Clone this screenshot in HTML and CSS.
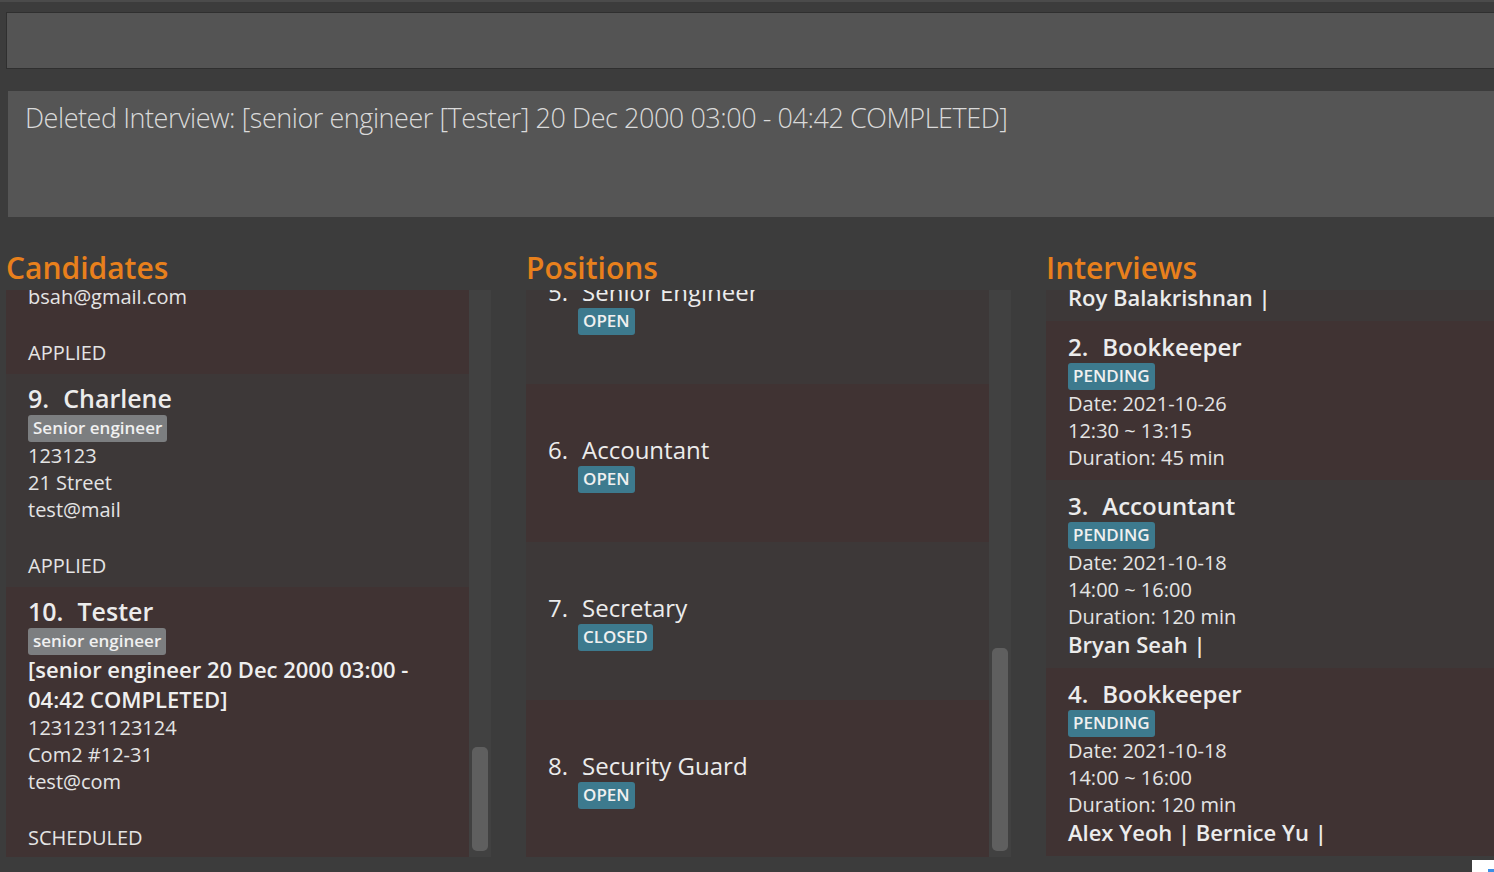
FILE: index.html
```html
<!DOCTYPE html>
<html>
<head>
<meta charset="utf-8">
<title>Recruitment</title>
<link rel="stylesheet" href="styles.css">
</head>
<body>
<div class="menubar"></div>
<div class="command"></div>
<div class="result">Deleted Interview: [senior engineer [Tester] 20 Dec 2000 03:00 - 04:42 COMPLETED]</div>
<div class="panels">
  <section class="panel">
    <h2 class="panel-title">Candidates</h2>
    <div class="list">
      <div class="viewport">
        <div class="cards cands-scroll">
          <div class="card brown cand">
            <div class="line">bsah@gmail.com</div>
            <div class="status">APPLIED</div>
          </div>
          <div class="card gray cand">
            <div class="name"><span class="idx">9.</span><span>Charlene</span></div>
            <div class="tags"><span class="tag tag-gray">Senior engineer</span></div>
            <div class="line">123123</div>
            <div class="line">21 Street</div>
            <div class="line">test@mail</div>
            <div class="status">APPLIED</div>
          </div>
          <div class="card brown cand">
            <div class="name"><span class="idx">10.</span><span>Tester</span></div>
            <div class="tags"><span class="tag tag-gray">senior engineer</span></div>
            <div class="iv">[senior engineer 20 Dec 2000 03:00 - 04:42 COMPLETED]</div>
            <div class="line">1231231123124</div>
            <div class="line">Com2 #12-31</div>
            <div class="line">test@com</div>
            <div class="status">SCHEDULED</div>
          </div>
        </div>
      </div>
      <div class="scrollbar"><div class="thumb" style="height:104px"></div></div>
    </div>
  </section>

  <section class="panel">
    <h2 class="panel-title">Positions</h2>
    <div class="list">
      <div class="viewport">
        <div class="cards pos-scroll">
          <div class="card gray pos">
            <div class="pos-title"><span class="idx">5.</span><span>Senior Engineer</span></div>
            <div class="tags pos-tags"><span class="tag tag-blue">OPEN</span></div>
          </div>
          <div class="card brown pos">
            <div class="pos-title"><span class="idx">6.</span><span>Accountant</span></div>
            <div class="tags pos-tags"><span class="tag tag-blue">OPEN</span></div>
          </div>
          <div class="card gray pos">
            <div class="pos-title"><span class="idx">7.</span><span>Secretary</span></div>
            <div class="tags pos-tags"><span class="tag tag-blue">CLOSED</span></div>
          </div>
          <div class="card brown pos">
            <div class="pos-title"><span class="idx">8.</span><span>Security Guard</span></div>
            <div class="tags pos-tags"><span class="tag tag-blue">OPEN</span></div>
          </div>
        </div>
      </div>
      <div class="scrollbar"><div class="thumb" style="height:203px"></div></div>
    </div>
  </section>

  <section class="panel">
    <h2 class="panel-title">Interviews</h2>
    <div class="list">
      <div class="viewport">
        <div class="cards iv-scroll">
          <div class="card gray ivcard">
            <div class="names">Roy Balakrishnan |</div>
          </div>
          <div class="card brown ivcard">
            <div class="iv-title"><span class="idx">2.</span><span>Bookkeeper</span></div>
            <div class="tags"><span class="tag tag-blue">PENDING</span></div>
            <div class="line">Date: 2021-10-26</div>
            <div class="line">12:30 ~ 13:15</div>
            <div class="line">Duration: 45 min</div>
          </div>
          <div class="card gray ivcard">
            <div class="iv-title"><span class="idx">3.</span><span>Accountant</span></div>
            <div class="tags"><span class="tag tag-blue">PENDING</span></div>
            <div class="line">Date: 2021-10-18</div>
            <div class="line">14:00 ~ 16:00</div>
            <div class="line">Duration: 120 min</div>
            <div class="names">Bryan Seah |</div>
          </div>
          <div class="card brown ivcard">
            <div class="iv-title"><span class="idx">4.</span><span>Bookkeeper</span></div>
            <div class="tags"><span class="tag tag-blue">PENDING</span></div>
            <div class="line">Date: 2021-10-18</div>
            <div class="line">14:00 ~ 16:00</div>
            <div class="line">Duration: 120 min</div>
            <div class="names">Alex Yeoh | Bernice Yu |</div>
          </div>
        </div>
      </div>
    </div>
  </section>
</div>
<div class="corner"><span class="corner-mark"></span></div>
</body>
</html>
```

FILE: styles.css
```css
* { box-sizing: border-box; }
html, body { margin: 0; padding: 0; }
body {
  width: 1494px;
  height: 872px;
  overflow: hidden;
  position: relative;
  background: #3c3c3c;
  font-family: "Open Sans", "Noto Sans", sans-serif;
  color: #e4e4e4;
}
.menubar { height: 2px; background: #4b4b4b; }
.command {
  margin: 10px 0 0 6px;
  height: 57px;
  background: #545454;
  border: 1px solid #2f2f2f;
  border-right: none;
}
.result {
  margin: 22px 0 0 8px;
  height: 126px;
  background: #555555;
  padding: 8px 17px;
  font-size: 27px;
  font-weight: 300;
  letter-spacing: -0.45px;
  color: #dadada;
  white-space: nowrap;
}
.panels {
  display: flex;
  gap: 35px;
  padding-left: 6px;
  margin-top: 29px;
}
.panel { flex: 0 0 485px; display: flex; flex-direction: column; }
.panel-title {
  margin: 0;
  font-size: 30px;
  font-weight: 600;
  line-height: 44px;
  color: #e8801c;
}
.list { height: 567px; display: flex; }
.viewport { flex: 0 0 463px; overflow: hidden; }
.panel:last-child .viewport { flex: 0 0 485px; }
.scrollbar {
  flex: 0 0 22px;
  background: #414141;
  display: flex;
  flex-direction: column;
  justify-content: flex-end;
  align-items: center;
  padding-bottom: 6px;
}
.thumb { width: 16px; background: #5f5f5f; border-radius: 5px; }

.cands-scroll { margin-top: -14px; }
.pos-scroll { margin-top: -64px; }
.iv-scroll { margin-top: -16px; }

.card.brown { background: #403333; }
.card.gray { background: #3d3838; }

.idx { margin-right: 14px; }

.cand { padding: 7px 20px 8px 22px; }
.name { display: flex; font-size: 25px; font-weight: 600; line-height: 34px; color: #ececec; }
.tags { display: flex; height: 27px; align-items: center; }
.tag {
  font-size: 17px;
  font-weight: 600;
  line-height: 24px;
  padding: 1px 5px 2px;
  border-radius: 3px;
  color: #f0f0f0;
}
.tag-gray { background: #7c7e80; }
.tag-blue { background: #3d7a8e; }
.line { font-size: 20px; line-height: 27px; }
.iv { font-size: 22px; font-weight: 600; line-height: 29.5px; color: #efefef; }
.status { font-size: 20px; line-height: 27px; margin-top: 29px; }

.pos {
  height: 158px;
  display: flex;
  flex-direction: column;
  justify-content: center;
  padding-left: 22px;
}
.pos-title { display: flex; font-size: 24px; font-weight: 500; line-height: 33px; color: #ececec; }
.pos-tags { margin-left: 30px; }

.ivcard { padding: 9px 20px 9px 22px; }
.iv-title { display: flex; font-size: 24px; font-weight: 600; line-height: 33px; color: #ececec; }
.names { font-size: 22px; font-weight: 600; line-height: 29px; color: #ececec; }

.corner {
  position: absolute;
  right: 0;
  bottom: 0;
  width: 22px;
  height: 12px;
  background: #ffffff;
}
.corner-mark {
  position: absolute;
  right: 0;
  bottom: 0;
  width: 6px;
  height: 3px;
  background: #3a8ee6;
}
```
